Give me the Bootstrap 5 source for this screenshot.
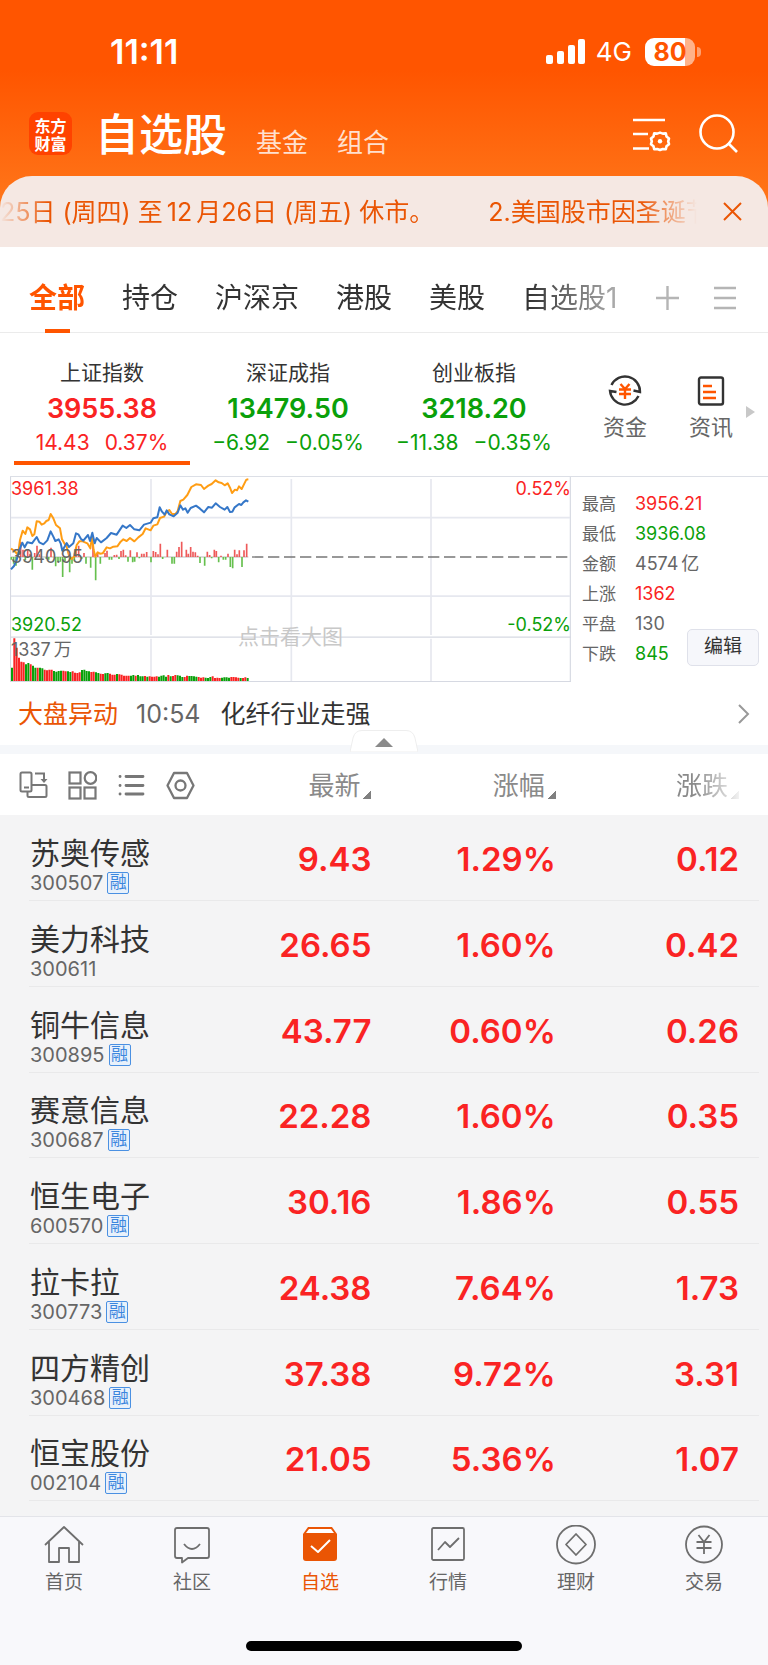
<!DOCTYPE html>
<html lang="zh-CN">
<head>
<meta charset="utf-8">
<meta name="viewport" content="width=device-width, initial-scale=1">
<title>自选股</title>
<link href="https://cdn.jsdelivr.net/npm/bootstrap@5.3.0/dist/css/bootstrap.min.css" rel="stylesheet">
<style>
:root{--up:#fa2323;--down:#0aa00a;--brand:#ff5500;--ink:#333;--soft:#666}
body{font-family:"Inter","Noto Sans CJK SC",sans-serif;color:var(--ink);background:#fff;font-size:18px}
button{border:0;background:none;padding:0;color:inherit}
a{color:inherit;text-decoration:none}
svg{display:block;fill:none;flex:none}
.up{color:var(--up)}.down{color:var(--down)}
.hero{background:linear-gradient(#ff5500 0,#ff5500 70px,#ff7519 200px);color:#fff}
.status{height:104px;padding:0 67px 0 110px}
.clock{font-size:34px;font-weight:600;line-height:40px}
.net{font-size:26px;line-height:32px;margin:0 13px 0 10px}
.battery{width:50px;height:28px;border-radius:9px;background:linear-gradient(90deg,#fff 80%,#ffb28a 80%);color:var(--brand);font-size:25px;font-weight:700;line-height:28px;text-align:center}
.nub{width:4px;height:10px;border-radius:0 4px 4px 0;background:#ffa070;margin-left:2px}
.topbar{height:72px;padding:0 29px}
.logo{width:43px;height:43px;border-radius:9px;background:#ff4200;font:700 16px/18px "Noto Sans CJK SC",sans-serif;padding:4px 0;text-align:center}
.title{font-size:44px;line-height:62px;font-weight:500;margin:0 0 0 23px}
.subtab{font-size:26px;line-height:36px;color:#ffe0cf;margin:0 0 5px 29px}
.ticker{background:#f5e8e3;border-radius:32px 32px 0 0;height:71px;color:#ea5504;font-size:25px;line-height:36px}
.ticker-text{flex:0 1 697px;gap:54px;-webkit-mask-image:linear-gradient(90deg,transparent 0,#000 48px,#000 640px,transparent 697px);mask-image:linear-gradient(90deg,transparent 0,#000 48px,#000 640px,transparent 697px)}
.ticker-text>span{flex:none}
.ticker-text i{font-style:normal;margin:0 4px 0 4px}
.groups{height:86px;border-bottom:1px solid #ebebeb;padding:16px 32px 0 29px;font-size:28px;line-height:40px}
.groups a{position:relative;white-space:nowrap}
.groups .on{color:var(--brand);font-weight:700}
.groups .on::after{content:"";position:absolute;left:16px;bottom:-15px;width:25px;height:4px;background:var(--brand)}
.groups nav{gap:37px;-webkit-mask-image:linear-gradient(90deg,#000 85%,rgba(0,0,0,.4) 100%);mask-image:linear-gradient(90deg,#000 85%,rgba(0,0,0,.4) 100%);padding:15px 0}
.groups .tools{gap:35px}
.indices{padding:25px 13px 10px 9px}
.index{flex:0 0 186px;padding:0 5px}
.index-name{font-size:21px;line-height:30px}
.index-value{font-size:27px;line-height:34px;font-weight:600;margin-top:4px}
.index-move{font-size:21px;line-height:28px;gap:15px;margin-top:3px}
.index-bar{height:4px;margin:4px 0 1px}
.index.on .index-bar{background:var(--brand)}
.shortcuts{padding-left:28px;gap:26px}
.shortcut{flex:0 0 60px;font-size:22px;line-height:30px;color:var(--soft)}
.market{border-top:1px solid #dcdfe6;margin-left:10px}
.chart{flex:0 0 561px;color:var(--soft);line-height:22px}
.chart>span{position:absolute;padding-left:1px}
.hint{left:227px;top:146px;font-size:21px;line-height:28px;color:#c8c8c8}
.unit{margin-left:3px}
.facts{padding:12px 9px 0 11px;line-height:30px;color:var(--soft)}
.facts dl{margin:0;display:grid;grid-template-columns:53px auto;grid-auto-rows:30px}
.facts dt{font-size:17px;font-weight:400}.facts dd{margin:0;font-size:18px}
.edit{right:9px;top:152px;width:72px;height:37px;border:1px solid #dfe1ea;border-radius:5px;background:#f6f7fb;font-size:19px;color:var(--ink)}
.news{height:63px;padding:1px 17px 0 18px;font-size:25px;line-height:36px;gap:20px}
.news time{color:var(--soft);margin-left:-2px}
.divider{height:9px;background:#f5f7fa}
.handle{left:calc(50% - 34px);bottom:2px}
.stocks{table-layout:fixed;background:#f4f4f5}
.stocks thead th{height:61px;padding-top:2px;background:#fff;font-weight:400;font-size:26px;color:#8a8a8a;text-align:right}
.stocks thead button{line-height:36px}
.stocks th:last-child,.stocks td:last-child{padding-right:29px}
.stocks thead th:first-child{padding-left:19px}
.fade-end{-webkit-mask-image:linear-gradient(90deg,#000 30%,rgba(0,0,0,.1) 100%);mask-image:linear-gradient(90deg,#000 30%,rgba(0,0,0,.1) 100%)}
.corner{display:inline-block;width:8px;height:8px;margin-left:3px;vertical-align:-4px;background:linear-gradient(135deg,transparent 50%,#808080 50%)}
.stocks tbody tr{height:86px;background:linear-gradient(#e9e9ea,#e9e9ea) no-repeat 29px 100%/calc(100% - 38px) 1px}
.stocks tbody tr:nth-child(4n){height:85px}
.stocks tbody th{padding:13px 0 0 30px;font-weight:400;white-space:nowrap}
.stocks tbody td{text-align:right;color:var(--up);font-size:33px;font-weight:600;line-height:40px;padding-top:2px}
.stock-name{font-size:30px;line-height:34px}
.stock-code{font-size:20px;line-height:22px;color:var(--soft);gap:4px;margin-top:2px}
.rong{width:22px;height:22px;border:1px solid #4a90e2;border-radius:2px;color:#3c86de;background:#e8f1fb;font-size:17px;line-height:19px;text-align:center}
.rest{height:15px;background:#f4f4f5}
.tabbar{background:#f8f8fb;border-top:1px solid #e3e4e9;padding-top:8px;height:149px}
.tabbar a{flex:1 1 0;font-size:19px;line-height:26px;color:var(--soft)}
.tabbar .on{color:#ea5504}
.tabbar svg{margin-bottom:5px}
.home{width:36%;height:10px;border-radius:5px;background:#000;margin:0 auto 14px}
</style>
</head>
<body>
<header class="hero">
  <div class="status d-flex align-items-center justify-content-between">
    <span class="clock">11:11</span>
    <div class="d-flex align-items-center">
      <svg width="40" height="26" viewBox="0 0 40 26"><g fill="#fff"><rect y="16" width="7" height="9" rx="2"/><rect x="11" y="12" width="7" height="13" rx="2"/><rect x="22" y="6" width="7" height="19" rx="2"/><rect x="32" width="7" height="25" rx="2"/></g></svg>
      <span class="net">4G</span>
      <span class="battery">80</span><span class="nub"></span>
    </div>
  </div>
  <div class="topbar d-flex align-items-start">
    <div class="logo mt-2">东方<br>财富</div>
    <nav class="d-flex align-items-end">
      <h1 class="title">自选股</h1>
      <a class="subtab" href="#">基金</a>
      <a class="subtab" href="#">组合</a>
    </nav>
    <div class="d-flex ms-auto pt-2" style="gap:27px">
      <button aria-label="列表设置"><svg width="40" height="42" viewBox="0 0 40 42" stroke="#fff" stroke-width="2.6"><path d="M1 8H33M1 22H16M1 36.500H17"/><path d="M36.200 29.300L37 32.200 34.500 34.200 33.800 37.200 30.800 37 28 38 25.200 37 22.200 37.200 21.500 34.200 19 32.200 19.800 29.300 19 26.400 21.500 24.400 22.200 21.400 25.200 21.600 28 20.600 30.800 21.600 33.800 21.400 34.500 24.400 37 26.400z" stroke-linejoin="round"/><circle cx="28" cy="29.300" r="2.200" fill="#fff" stroke="none"/></svg></button>
      <button aria-label="搜索"><svg width="40" height="42" viewBox="0 0 40 42" stroke="#fff" stroke-width="2.600"><circle cx="18" cy="20" r="16.500"/><path d="M29 31l9 9"/></svg></button>
    </div>
  </div>
  <div class="ticker d-flex align-items-center">
    <div class="ticker-text d-flex overflow-hidden text-nowrap"><span>25日 (周四) 至<i>12</i>月26日 (周五) 休市。</span><span>2.美国股市因圣诞节</span></div>
    <button class="ms-auto me-4" aria-label="关闭"><svg width="22" height="22" viewBox="0 0 22 22" stroke="#ea5504" stroke-width="2"><path d="M2 2l17 17M19 2L2 19"/></svg></button>
  </div>
</header>

<div class="groups d-flex align-items-center justify-content-between">
  <nav class="d-flex"><a class="on" href="#">全部</a><a href="#">持仓</a><a href="#">沪深京</a><a href="#">港股</a><a href="#">美股</a><a href="#">自选股1</a></nav>
  <div class="tools d-flex">
    <button aria-label="添加分组"><svg width="23" height="24" viewBox="0 0 23 24" stroke="#b5b5b5" stroke-width="2.400"><path d="M0 12h23M11.500 0v24"/></svg></button>
    <button aria-label="管理分组"><svg width="22" height="24" viewBox="0 0 22 24" stroke="#b5b5b5" stroke-width="2.600"><path d="M0 2h22M0 12h22M0 22h22"/></svg></button>
  </div>
</div>

<section class="indices d-flex">
  <a class="index on text-center" href="#"><div class="index-name">上证指数</div><div class="index-value up">3955.38</div><div class="index-move up d-flex justify-content-center"><span>14.43</span><span>0.37%</span></div><div class="index-bar"></div></a>
  <a class="index text-center" href="#"><div class="index-name">深证成指</div><div class="index-value down">13479.50</div><div class="index-move down d-flex justify-content-center"><span>−6.92</span><span>−0.05%</span></div><div class="index-bar"></div></a>
  <a class="index text-center" href="#"><div class="index-name">创业板指</div><div class="index-value down">3218.20</div><div class="index-move down d-flex justify-content-center"><span>−11.38</span><span>−0.35%</span></div><div class="index-bar"></div></a>
  <div class="shortcuts d-flex align-items-start pt-3">
    <a class="shortcut text-center" href="#"><svg class="mx-auto mb-1" width="34" height="34" viewBox="0 0 34 34" stroke="#333" stroke-width="2.400"><path d="M3.500 11A15 15 0 0 1 32 18L25.500 16.500M30.500 22A15 15 0 0 1 2 17L8.500 18"/><path d="M12.500 10L17 15l4.500-5M11 15.500h12M11 20h12M17 15v10" stroke="#ff5500"/></svg>资金</a>
    <a class="shortcut text-center" href="#"><svg class="mx-auto mb-1" width="34" height="34" viewBox="0 0 34 34" stroke="#333" stroke-width="2.400"><rect x="5" y="3.500" width="24" height="27" rx="2"/><path d="M9 12h9M9 18h13M9 24h13" stroke="#ff5500"/></svg>资讯</a>
  </div>
  <svg class="ms-auto align-self-center" width="9" height="12" viewBox="0 0 9 12"><path d="M0 0l9 6-9 6z" fill="#c8c8c8"/></svg>
</section>

<section class="market d-flex position-relative">
  <div class="chart position-relative">
    <svg class="w-100" viewBox="30 36 1683 615">
      <path d="M31.500 33V650M1711 33V650M30 516.500H1713M30 649.500H1713" stroke="#d6d9e2" stroke-width="3.500"/>
      <path d="M33 158H1710M33 393.500H1710M453 42V510M453 521V648M874 42V510M874 521V648M1293 42V510M1293 521V648" stroke="#e6e8ef" stroke-width="5"/>
      <path d="M33 276H745" stroke="#999" stroke-width="2"/>
      <path d="M756 276H1710" stroke="#777" stroke-width="4" stroke-dasharray="34 14"/>
      <path id="turnoverUp" stroke="#fa2323" stroke-width="6"/><path id="turnoverDown" stroke="#0aa00a" stroke-width="6"/>
      <path id="flowUp" stroke="#ee5a5a" stroke-width="5"/><path id="flowDown" stroke="#66c04e" stroke-width="5"/>
      <polyline stroke="#ff9d14" stroke-width="6" stroke-linejoin="round" points="33,251 44,258 54,270 60,225 68,197 76,207 82,187 90,193 97,213 103,208 110,169 118,170 125,179 133,175 139,168 146,165 152,147 160,160 168,180 180,190 186,223 193,235 200,245 208,275 215,282 222,275 230,240 238,229 248,229 262,235 271,250 276,215 281,255 286,275 293,262 300,266 308,265 320,247 330,250 340,245 352,244 362,230 370,223 380,228 390,219 403,229 415,217 428,207 437,190 452,196 460,182 472,178 480,159 492,155 500,140 508,135 516,147 526,147 533,138 541,108 550,104 562,90 574,66 588,58 603,60 612,72 625,62 635,57 647,46 656,52 665,54 674,61 683,55 690,68 696,84 705,74 711,76 717,64 725,72 733,56 739,44 745,43"/>
      <polyline stroke="#3577c8" stroke-width="6" stroke-linejoin="round" points="33,313 42,303 50,285 58,255 67,233 74,247 82,232 96,235 110,216 118,232 130,238 142,226 152,199 160,215 166,228 176,223 182,235 187,257 200,234 207,246 220,235 228,205 235,208 243,222 250,227 264,210 270,228 277,203 284,235 290,219 303,232 320,219 333,204 350,209 368,182 379,189 390,180 403,193 418,196 432,179 452,173 460,160 472,157 479,127 486,140 494,149 500,136 508,148 521,154 533,143 541,121 549,134 556,130 563,143 572,129 588,122 600,131 612,142 625,126 636,128 647,115 660,126 674,134 682,126 690,141 697,140 704,127 717,117 724,120 730,112 738,106 745,110"/>
    </svg>
    <span class="up start-0" style="top:1px">3961.38</span>
    <span class="up end-0" style="top:1px">0.52%</span>
    <span class="start-0" style="top:69px">3940.95</span>
    <span class="down start-0" style="top:137px">3920.52</span>
    <span class="down end-0" style="top:137px">-0.52%</span>
    <span class="start-0" style="top:162px">1337<span class="unit">万</span></span>
    <span class="hint">点击看大图</span>
  </div>
  <div class="facts">
    <dl><dt>最高</dt><dd class="up">3956.21</dd><dt>最低</dt><dd class="down">3936.08</dd><dt>金额</dt><dd>4574<span class="unit">亿</span></dd><dt>上涨</dt><dd class="up">1362</dd><dt>平盘</dt><dd>130</dd><dt>下跌</dt><dd class="down">845</dd></dl>
  </div>
  <button class="edit position-absolute">编辑</button>
</section>

<div class="position-relative">
  <a class="news d-flex align-items-center" href="#"><span style="color:#ea5504">大盘异动</span><time>10:54</time><span>化纤行业走强</span>
    <svg class="ms-auto" width="14" height="22" viewBox="0 0 14 22" stroke="#999" stroke-width="2"><path d="M2 2l9 9-9 9"/></svg></a>
  <div class="divider"></div>
  <button class="handle position-absolute" aria-label="收起"><svg width="68" height="22" viewBox="0 0 68 22"><path d="M0 22L3 8Q5 .5 12 .5H56Q63 .5 65 8L68 22z" fill="#fff" stroke="#eee"/><path d="M25 17L34 8l9 9z" fill="#8a8a8a"/></svg></button>
</div>

<table class="stocks w-100">
  <colgroup><col style="width:26%"><col style="width:22.500%"><col style="width:24%"><col></colgroup>
  <thead><tr>
    <th><div class="d-flex" style="gap:20px">
      <button aria-label="切换布局"><svg width="29" height="29" viewBox="0 0 29 29" stroke="#777" stroke-width="2"><path d="M8 20.500H3Q1.500 20.500 1.500 19V3Q1.500 1.500 3 1.500H11Q12.500 1.500 12.500 3V19Q12.500 20.500 11 20.500H8M5 16.500h5M16 2.500H25V9"/><path d="M21.500 8h7L25 12z" fill="#777" stroke="none"/><path d="M13 14H26Q27.500 14 27.500 15.500V24.500Q27.500 26 26 26H10Q8.500 26 8.500 24.500V21"/></svg></button>
      <button aria-label="宫格"><svg width="29" height="29" viewBox="0 0 29 29" stroke="#777" stroke-width="2.200"><rect x="1.500" y="1.500" width="11" height="11"/><circle cx="22.500" cy="7" r="5.800"/><rect x="1.500" y="16.500" width="11" height="11"/><rect x="16.500" y="16.500" width="11" height="11"/></svg></button>
      <button aria-label="列表"><svg width="29" height="29" viewBox="0 0 29 29" stroke="#777" stroke-width="2.800" stroke-linecap="round"><path d="M9 5.500h17M9 14.500h17M9 23h17M3 5.500h.1M3 14.500h.1M3 23h.1"/></svg></button>
      <button aria-label="设置"><svg width="29" height="29" viewBox="0 0 29 29" stroke="#777" stroke-width="2.300" stroke-linejoin="round"><path d="M8 2H21L27.500 14.500 21 27H8L1.500 14.500z"/><circle cx="14.500" cy="14.500" r="5"/></svg></button>
    </div></th>
    <th><button>最新<i class="corner"></i></button></th><th><button>涨幅<i class="corner"></i></button></th><th><button class="fade-end">涨跌<i class="corner"></i></button></th>
  </tr></thead>
  <tbody>
    <tr><th><div class="stock-name">苏奥传感</div><div class="stock-code d-flex">300507<span class="rong">融</span></div></th><td>9.43</td><td>1.29%</td><td>0.12</td></tr>
    <tr><th><div class="stock-name">美力科技</div><div class="stock-code d-flex">300611</div></th><td>26.65</td><td>1.60%</td><td>0.42</td></tr>
    <tr><th><div class="stock-name">铜牛信息</div><div class="stock-code d-flex">300895<span class="rong">融</span></div></th><td>43.77</td><td>0.60%</td><td>0.26</td></tr>
    <tr><th><div class="stock-name">赛意信息</div><div class="stock-code d-flex">300687<span class="rong">融</span></div></th><td>22.28</td><td>1.60%</td><td>0.35</td></tr>
    <tr><th><div class="stock-name">恒生电子</div><div class="stock-code d-flex">600570<span class="rong">融</span></div></th><td>30.16</td><td>1.86%</td><td>0.55</td></tr>
    <tr><th><div class="stock-name">拉卡拉</div><div class="stock-code d-flex">300773<span class="rong">融</span></div></th><td>24.38</td><td>7.64%</td><td>1.73</td></tr>
    <tr><th><div class="stock-name">四方精创</div><div class="stock-code d-flex">300468<span class="rong">融</span></div></th><td>37.38</td><td>9.72%</td><td>3.31</td></tr>
    <tr><th><div class="stock-name">恒宝股份</div><div class="stock-code d-flex">002104<span class="rong">融</span></div></th><td>21.05</td><td>5.36%</td><td>1.07</td></tr>
  </tbody>
</table>
<div class="rest"></div>

<footer class="tabbar d-flex flex-column justify-content-between">
  <nav class="d-flex text-center">
    <a href="#"><svg class="mx-auto" width="40" height="40" viewBox="0 0 40 40" stroke="#6e6e6e" stroke-width="1.800"><path d="M1 20L20 2l19 18M5 17V37H15V23H25V37H35V17" stroke-linejoin="round"/></svg>首页</a>
    <a href="#"><svg class="mx-auto" width="40" height="40" viewBox="0 0 40 40" stroke="#6e6e6e" stroke-width="1.800" stroke-linejoin="round"><path d="M5 3H35Q37 3 37 5V31Q37 33 35 33H16L10 37.500V33H5Q3 33 3 31V5Q3 3 5 3zM12 19q8 10 16 0"/></svg>社区</a>
    <a class="on" href="#"><svg class="mx-auto" width="40" height="40" viewBox="0 0 40 40" stroke-linejoin="round"><path d="M3 9L8 2H32L37 9V33Q37 36 34 36H6Q3 36 3 33z" fill="#ea5504"/><path d="M9 4H31L34 8H6z" fill="#fff"/><path d="M11 21l7 6L30 15" stroke="#fff" stroke-width="2"/></svg>自选</a>
    <a href="#"><svg class="mx-auto" width="40" height="40" viewBox="0 0 40 40" stroke="#6e6e6e" stroke-width="1.800" stroke-linejoin="round"><rect x="4" y="3" width="32" height="32" rx="1.500"/><path d="M10 25l7-8 5 5 9-9"/></svg>行情</a>
    <a href="#"><svg class="mx-auto" width="40" height="40" viewBox="0 0 40 40" stroke="#6e6e6e" stroke-width="1.800" stroke-linejoin="round"><circle cx="20" cy="19.500" r="19"/><path d="M20 9L30 19.500 20 30 10 19.500z"/></svg>理财</a>
    <a href="#"><svg class="mx-auto" width="40" height="40" viewBox="0 0 40 40" stroke="#6e6e6e" stroke-width="1.800"><circle cx="20" cy="19.500" r="18"/><path d="M14.500 10L20 17l5.500-7M12.500 17h15M12.500 23h15M20 17v12"/></svg>交易</a>
  </nav>
  <div class="home"></div>
</footer>

<script src="https://cdn.jsdelivr.net/npm/bootstrap@5.3.0/dist/js/bootstrap.bundle.min.js"></script>
<script>
// [x, size] of each minute's net flow, drawn from the previous-close line
const flowUp=[[62,46],[69,22],[83,24],[90,10],[104,12],[111,34],[118,8],[153,28],[228,30],[236,34],[252,12],[279,38],[293,14],[315,12],[321,19],[343,6],[350,7],[363,18],[370,22],[377,5],[391,20],[411,14],[425,10],[432,10],[440,15],[460,18],[467,15],[474,8],[481,40],[502,22],[530,16],[537,30],[545,46],[559,22],[565,10],[572,30],[579,16],[586,14],[593,4],[622,16],[629,6],[643,22],[649,18],[663,4],[684,10],[704,22],[711,8],[718,20],[732,20],[740,40]];
const flowDown=[[34,8],[41,20],[48,26],[76,10],[97,38],[139,6],[146,8],[167,28],[174,14],[181,14],[188,60],[195,12],[209,46],[216,20],[223,10],[245,6],[258,20],[272,32],[287,70],[301,20],[328,8],[335,8],[357,6],[384,14],[398,16],[404,14],[418,4],[453,16],[488,6],[516,20],[523,20],[600,18],[614,26],[635,4],[656,16],[670,8],[677,8],[691,30],[698,34],[726,30]];
// turnover per minute, with r for a rise and g for a fall
const turnover=[40,128,100,70,58,56,50,54,50,46,40,40,40,38,34,32,34,34,30,28,30,31,31,29,29,27,29,25,24,26,33,34,30,29,27,28,26,24,22,21,23,24,22,19,19,21,20,19,16,16,16,16,18,16,18,14,14,15,13,14,13,13,14,13,16,17,13,18,14,15,18,17,16,12,12,16,15,15,14,13,12,10,11,10,9,12,14,9,10,9,10,11,11,10,12,12,11,10,9,9,11,9];
const trend="grrrrrggrggrggrrrrggggrrggrrrrggggrrggrrggrrrgrrrrrggrgggrgrrrrggggrgrrgggrrggggrrrgggrrrrggggrrrrgrrg";
const bars=(list,base,dir)=>list.map(([x,h])=>`M${x} ${base}V${base+dir*h}`).join("");
const vol=c=>bars(turnover.map((h,i)=>[36+i*7,h,trend[i]]).filter(b=>b[2]===c),648,-1);
const put=(id,d)=>document.getElementById(id).setAttribute("d",d);
put("flowUp",bars(flowUp,276,-1));put("flowDown",bars(flowDown,276,1));
put("turnoverUp",vol("r"));put("turnoverDown",vol("g"));
</script>
</body>
</html>
